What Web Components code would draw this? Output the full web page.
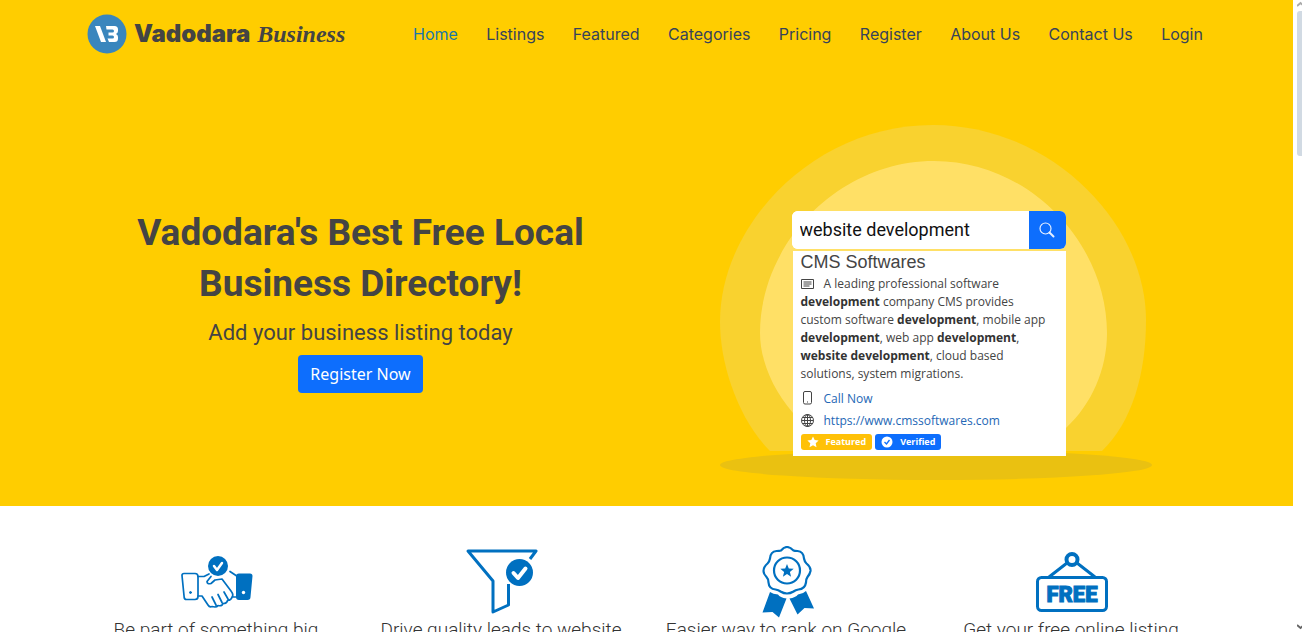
<!DOCTYPE html>
<html lang="en">
<head>
<meta charset="utf-8">
<title>Vadodara Business</title>
<style>
html,body{margin:0;height:100%}
body{font-family:"Open Sans",sans-serif;color:#444;background:#fff;overflow:hidden}
</style>
</head>
<body>
<vb-app></vb-app>
<script>
const define=(name,html)=>customElements.define(name,class extends HTMLElement{
  constructor(){super();this.attachShadow({mode:"open"}).innerHTML=html;}
});

define("vb-logo",`<style>
:host{display:block}
a{display:flex;align-items:center;gap:7px;color:#444;text-decoration:none}
svg{width:40px;height:40px;display:block}
.name{font:900 24px/30px Inter,sans-serif}
.script{font:italic bold 24px/30px "Liberation Serif",serif}
</style>
<a href="#home"><svg viewBox="0 0 40 40" aria-hidden="true"><circle cx="20" cy="20" r="19.5" fill="#3a86bd"/>
<path d="M8 12h5l6 16h-5z" fill="#fff"/><path d="M19 12h8.500q3.500 0 3.500 3.500v1.500q0 2-2 3 2 1 2 3v1.500q0 3.500-3.500 3.500h-5.500l-1.500-3.500h5q1.500 0 1.500-1.500t-1.500-1.500h-4v-3h4q1.500 0 1.500-1.500t-1.500-1.500h-6z" fill="#fff"/></svg>
<span class="name">Vadodara</span><span class="script">Business</span></a>`);

define("vb-nav-link",`<style>
:host{display:block;font:16px/24px Inter,sans-serif;color:#37435a}
:host([current]){color:#1977a8}
a{color:inherit;text-decoration:none}
</style><a href="#"><slot></slot></a>`);

define("vb-header",`<style>
:host{display:block}
header{display:flex;align-items:center;justify-content:space-between;height:68px;padding:0 90px 0 87px}
nav{display:flex;justify-content:space-between;flex:0 1 790px}
</style><header><vb-logo></vb-logo><nav><slot></slot></nav></header>`);

define("vb-backdrop",`<style>:host{display:block}svg{display:block;width:432px;height:356px}</style>
<svg viewBox="0 0 432 356" aria-hidden="true">
<path d="M50 327C18 295 0 240 0 198C0 100 94 1 213 1S426 100 426 196C426 250 412 298 382 327Z" fill="#f9d22f"/>
<path d="M73 289C52 265 40 235 40 209C40 120 118 37 214 37S387 120 387 209C387 245 372 280 346 304L340 327H73Z" fill="#ffe066"/>
<ellipse cx="216" cy="341" rx="216" ry="15" fill="#eac111"/></svg>`);

define("vb-search",`<style>
:host{display:block}
form{display:flex;height:38px;border-radius:6px;overflow:hidden;background:#fff}
input{flex:1;min-width:0;border:0;padding:0 8px;font:18px/38px Roboto,sans-serif;color:#111;background:#fff;outline:0}
button{width:37px;border:0;padding:0;background:#0d6efd;display:grid;place-items:center}
</style><form><input type="text" aria-label="Search businesses" value="website development"><button type="button" aria-label="Search"><svg width="16" height="16" viewBox="0 0 16 16" fill="none" stroke="#e5efff" stroke-linecap="round"><circle cx="6.500" cy="6.500" r="5.500" stroke-width="1.200"/><path d="M10.500 10.500L14.500 14.500" stroke-width="2"/></svg></button></form>`);

define("vb-badge",`<style>
:host{display:flex;align-items:center;gap:7px;height:16px;padding:0 6px;border-radius:3px;background:#ffc107;color:#fff;font:bold 9px/16px "Open Sans",sans-serif}
:host([verified]){background:#0d6efd}
::slotted(svg){width:12px;height:12px}
</style><slot name="icon"></slot><slot></slot>`);

define("vb-listing",`<style>
:host{display:block;background:#fff;padding:1px 8px 6px}
h2{margin:0;font:18px/20px "Liberation Sans",sans-serif;color:#444}
p{margin:3px 0 4px;font-size:12px;line-height:18px;white-space:nowrap}
b{font-weight:700;color:#333}
p svg{vertical-align:-2px;margin-right:10px}
.row{display:flex;align-items:center;gap:10px;height:22px;font-size:12px}
a{color:#2467b5;text-decoration:none}
.badges{display:flex;gap:3px;margin-top:3px}
svg{display:block;flex:none}p svg{display:inline}
</style>
<h2>CMS Softwares</h2>
<p><svg width="13" height="12" viewBox="0 0 13 12" fill="none" stroke="#444"><path d="M.500 1.500h12v9H.500z"/><path d="M2.500 4h8M2.500 6h8M2.500 8h6"/></svg>A leading professional software<br><b>development</b> company CMS provides<br>custom software <b>development</b>, mobile app<br><b>development</b>, web app <b>development</b>,<br><b>website development</b>, cloud based<br>solutions, system migrations.</p>
<div class="row"><svg width="13" height="14" viewBox="0 0 13 14" fill="none" stroke="#444"><rect x="2.500" y=".5" width="8" height="12.500" rx="1.500"/><path d="M6 11h1"/></svg><a href="#">Call Now</a></div>
<div class="row"><svg width="13" height="13" viewBox="0 0 13 13" fill="none" stroke="#444"><circle cx="6.500" cy="6.500" r="6"/><ellipse cx="6.500" cy="6.500" rx="3" ry="6"/><path d="M6.500 .5v12M.500 6.500h12M1.500 3.500h10M1.500 9.500h10"/></svg><a href="#">https://www.cmssoftwares.com</a></div>
<div class="badges"><vb-badge><svg slot="icon" viewBox="0 0 12 12" fill="#fff"><path d="M6 .5l1.700 3.600 3.900.5-2.900 2.700.8 3.900L6 9.300l-3.500 1.900.8-3.900L.400 4.600l3.900-.5z"/></svg>Featured</vb-badge><vb-badge verified><svg slot="icon" viewBox="0 0 12 12"><circle cx="6" cy="6" r="5.500" fill="#fff"/><path d="M3.500 6l2 2 3-4" fill="none" stroke="#0d6efd" stroke-width="1.300"/></svg>Verified</vb-badge></div>`);

define("vb-hero",`<style>
:host{display:block;background:#ffcd00;padding-bottom:26px}
.cols{display:grid;grid-template-columns:1fr 1fr;max-width:1140px;margin:56px auto 0;padding-right:2px}
.copy{padding-top:83px;text-align:center}
h1{margin:0 auto;max-width:480px;font:bold 37px/51px Roboto,sans-serif;color:#444}
h2{margin:10px 0 8px;font:22px/28px Roboto,sans-serif;color:#444}
button{height:38px;padding:0 12px;border:0;border-radius:4px;background:#0d6efd;color:#fff;font:16px/24px "Noto Sans",sans-serif}
figure{margin:0 0 0 74px;display:grid;justify-content:start}
figure>*{grid-area:1/1}
.card{width:274px;margin:87px 0 0 72px;z-index:1}
vb-listing{margin:2px 0 0 1px}
</style><slot name="header"></slot>
<div class="cols"><div class="copy"><h1>Vadodara's Best Free Local Business Directory!</h1><h2>Add your business listing today</h2><button type="button">Register Now</button></div>
<figure><vb-backdrop></vb-backdrop><div class="card"><vb-search></vb-search><vb-listing></vb-listing></div></figure></div>`);

define("vb-feature",`<style>
:host{display:flex;flex-direction:column;align-items:center}
::slotted(svg){width:72px;height:72px;margin-left:2px}
h3{margin:0;font:19px/24px Roboto,sans-serif;font-weight:300;color:#333;white-space:nowrap}
</style><slot name="icon"></slot><h3><slot></slot></h3>`);

define("vb-features",`<style>
:host{display:grid;grid-template-columns:repeat(4,1fr);max-width:1140px;margin:0 auto;padding:40px 6px 40px 0}
</style><slot></slot>`);

define("vb-scroll-rail",`<style>
:host{display:flex;flex-direction:column;justify-content:space-between;width:9px;background:#fff;overflow:hidden}
svg{display:block;margin-left:4px}
.thumb{height:145px;margin:2px 0 0 4px;border-radius:3px 0 0 3px;background:#d1dae3}
</style><div><svg width="7" height="9" viewBox="0 0 7 9"><path d="M0 6L3.500 3L7 6" fill="none" stroke="#aaa" stroke-width="2"/></svg><div class="thumb"></div></div>
<svg width="7" height="9" viewBox="0 0 7 9"><path d="M0 2L3.500 5L7 2" fill="none" stroke="#666" stroke-width="2"/></svg>`);

define("vb-app",`<style>
:host{display:flex;height:100vh;overflow:hidden}
main{flex:1;min-width:0;overflow:hidden}
</style><main>
<vb-hero><vb-header slot="header"><vb-nav-link current>Home</vb-nav-link><vb-nav-link>Listings</vb-nav-link><vb-nav-link>Featured</vb-nav-link><vb-nav-link>Categories</vb-nav-link><vb-nav-link>Pricing</vb-nav-link><vb-nav-link>Register</vb-nav-link><vb-nav-link>About Us</vb-nav-link><vb-nav-link>Contact Us</vb-nav-link><vb-nav-link>Login</vb-nav-link></vb-header></vb-hero>
<vb-features>
<vb-feature><svg slot="icon" viewBox="0 0 72 72" fill="none" stroke="#0070c0" stroke-width="1.700" stroke-linecap="round" stroke-linejoin="round"><path d="M3 27.500h11q3 0 3 3v20q0 3-3 3H5.500q-2 0-2.300-2L1 29.500q0-2 2-2z"/><circle cx="9.500" cy="46.500" r="1" fill="#0070c0" stroke-width="1"/><path d="M58 27.500h11q2.500 0 2.500 2.500l-2 21q0 3-3 3H58q-3 0-3-3V30q0-2.500 3-2.500z" fill="#0070c0" stroke="none"/><circle cx="62.500" cy="46.500" r="1.700" fill="#fff" stroke="none"/><path d="M17 30.500h6l5-2.500M49 25.500l6 4M17 50h4l6 9q1.500 2.500 4 1.500l3 .500q2 0 3-1.500 4 1 5-2 4 0 4.500-3 4-.500 4.500-3.500 2-2-1-6L41 33l-7 1-4 3.500q-4 1-4-2l4-5M51 51h4M31 51l4 8M37 48.500l4 8M43 46l4 7"/><circle cx="37" cy="20" r="10" fill="#0070c0" stroke="none"/><path d="M33 20l3 4 5-7" stroke="#fff" stroke-width="2.500"/></svg>Be part of something big</vb-feature>
<vb-feature><svg slot="icon" viewBox="0 0 72 72" fill="none" stroke="#0070c0" stroke-width="3" stroke-linejoin="round"><path d="M64 13l6-8H2l25 30v31l15.500-7V38"/><circle cx="53.500" cy="26.500" r="13.500" fill="#0070c0" stroke="none"/><path d="M47.500 27l4.500 5 7.500-9.500" stroke="#fff" stroke-width="4" stroke-linecap="round"/></svg>Drive quality leads to website</vb-feature>
<vb-feature><svg slot="icon" viewBox="0 0 72 72" fill="none" stroke="#0070c0" stroke-width="2.200"><path d="M36 1q3 0 6.500 3.500 1 .500 4 .5 6 .5 6.500 7.500.5 3 2.500 5 4.500 3.500 4 7.500-.5 3-3 6-1.500 2-1.500 5.500-1 6.500-7.500 7-3 .5-5 2-6.500 4-13 0-2-1.500-5-2-6.500-.5-7-7 0-3.500-2-5.500-3-3-3-6 0-4 4-7.500 2-2 2.500-5 .5-7 6.500-7.500 3 0 4.500-.5Q33 1 36 1z"/><circle cx="36" cy="24.500" r="13"/><path d="M36 18l1.800 4.500 4.900.3-3.800 3.200 1.200 4.800-4.100-2.700-4.100 2.700 1.200-4.800-3.800-3.200 4.900-.3z" fill="#0070c0" stroke="none"/><path d="M19 46q3 2 8 2.500 2 3 8.500 4L28 71.500l-6.500-5.500-10 .5zM38.500 52.500q6-1 8.500-4 5-.5 8-3.500l8 17.500-9.500-.5-7 6.500z" fill="#0070c0" stroke="none"/></svg>Easier way to rank on Google</vb-feature>
<vb-feature><svg slot="icon" viewBox="0 0 72 72" fill="none" stroke="#0070c0" stroke-width="3"><rect x="1.500" y="31.500" width="69" height="33" rx="4"/><circle cx="36" cy="13.500" r="5.500" stroke-width="4"/><path d="M31 17L13 31M41 17l18 14"/><text x="36" y="56" text-anchor="middle" font-family="Roboto,sans-serif" font-weight="900" font-size="22" fill="#0070c0" stroke="#0070c0" stroke-width="1">FREE</text></svg>Get your free online listing</vb-feature>
</vb-features></main><vb-scroll-rail aria-hidden="true"></vb-scroll-rail>`);
</script>
</body>
</html>
